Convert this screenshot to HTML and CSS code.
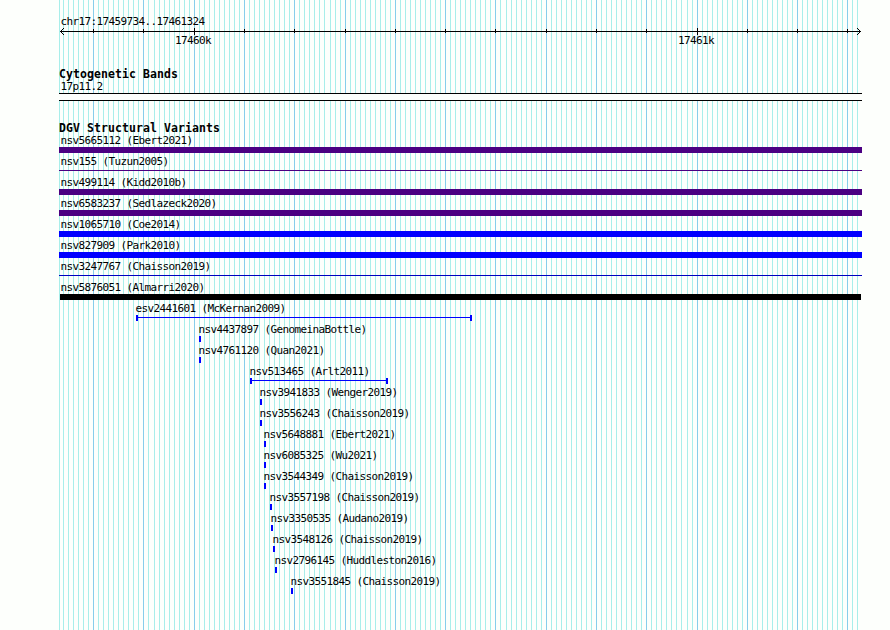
FILE: index.html
```
<!DOCTYPE html>
<html lang="en">
<head>
  <meta charset="UTF-8" />
  <title>chr17:17459734..17461324</title>
  <link rel="stylesheet" href="styles.css">
</head>
<body>
  <div class="browser">
    <svg class="grid" id="grid" width="890" height="630" shape-rendering="crispEdges"></svg>

    <div class="tracks">
      <div class="region">chr17:17459734..17461324</div>
      <svg class="ruler" id="ruler" width="803" height="8" shape-rendering="crispEdges">
        <path class="axis" d="M1 3h801v1h-801z" />
        <path class="axis" d="M2 2h1v3h-1zM3 1h1v1h-1zM3 5h1v1h-1zM4 0h1v1h-1zM4 6h1v1h-1z" />
        <path class="axis" d="M800 2h1v3h-1zM799 1h1v1h-1zM799 5h1v1h-1zM798 0h1v1h-1zM798 6h1v1h-1z" />
      </svg>
      <div class="scale"><span>17460k</span><span>17461k</span></div>

      <h2 class="title">Cytogenetic Bands</h2>
      <div class="name">17p11.2</div>
      <div class="band"></div>

      <h2 class="title variants-title">DGV Structural Variants</h2>
      <div class="variant full"><p>nsv5665112 (Ebert2021)</p><div class="bar loss"></div></div>
      <div class="variant full"><p>nsv155 (Tuzun2005)</p><div class="line loss"></div></div>
      <div class="variant full"><p>nsv499114 (Kidd2010b)</p><div class="bar loss"></div></div>
      <div class="variant full"><p>nsv6583237 (Sedlazeck2020)</p><div class="bar loss"></div></div>
      <div class="variant full"><p>nsv1065710 (Coe2014)</p><div class="bar gain"></div></div>
      <div class="variant full"><p>nsv827909 (Park2010)</p><div class="bar gain"></div></div>
      <div class="variant full"><p>nsv3247767 (Chaisson2019)</p><div class="line gain"></div></div>
      <div class="variant full"><p>nsv5876051 (Almarri2020)</p><div class="bar other"></div></div>
      <div class="variant" style="margin-left: 77px"><p>esv2441601 (McKernan2009)</p><div class="span" style="width: 336px"></div></div>
      <div class="variant" style="margin-left: 140px"><p>nsv4437897 (GenomeinaBottle)</p><div class="mark"></div></div>
      <div class="variant" style="margin-left: 140px"><p>nsv4761120 (Quan2021)</p><div class="mark"></div></div>
      <div class="variant" style="margin-left: 191px"><p>nsv513465 (Arlt2011)</p><div class="span" style="width: 138px"></div></div>
      <div class="variant" style="margin-left: 201px"><p>nsv3941833 (Wenger2019)</p><div class="mark"></div></div>
      <div class="variant" style="margin-left: 201px"><p>nsv3556243 (Chaisson2019)</p><div class="mark"></div></div>
      <div class="variant" style="margin-left: 205px"><p>nsv5648881 (Ebert2021)</p><div class="mark"></div></div>
      <div class="variant" style="margin-left: 205px"><p>nsv6085325 (Wu2021)</p><div class="mark"></div></div>
      <div class="variant" style="margin-left: 205px"><p>nsv3544349 (Chaisson2019)</p><div class="mark"></div></div>
      <div class="variant" style="margin-left: 211px"><p>nsv3557198 (Chaisson2019)</p><div class="mark"></div></div>
      <div class="variant" style="margin-left: 212px"><p>nsv3350535 (Audano2019)</p><div class="mark"></div></div>
      <div class="variant" style="margin-left: 214px"><p>nsv3548126 (Chaisson2019)</p><div class="mark"></div></div>
      <div class="variant" style="margin-left: 216px"><p>nsv2796145 (Huddleston2016)</p><div class="mark"></div></div>
      <div class="variant" style="margin-left: 232px"><p>nsv3551845 (Chaisson2019)</p><div class="mark"></div></div>
    </div>
  </div>

  <script src="script.js"></script>
</body>
</html>
```
FILE: styles.css
```
body {
  margin: 0;
  background: #fdfffc;
  color: #000;
  font-family: "DejaVu Sans Mono", monospace;
  font-size: 11px;
  letter-spacing: -0.62px;
  line-height: 12px;
}

.browser {
  position: relative;
  width: 890px;
  height: 630px;
  overflow: hidden;
}

/* grid lines run behind every track */
.grid {
  position: absolute;
  top: 0;
  left: 0;
}

.minor {
  fill: #a8eeea;
}

.major {
  fill: #87ceeb;
}

.axis {
  fill: #000;
}

.tracks {
  position: relative;
  width: 803px;
  padding: 16px 0 0 59px;
}

.region,
.name {
  padding-left: 1.5px;
}

.region {
  height: 12px;
}

.ruler {
  display: block;
}

.scale {
  display: flex;
  gap: 467px;
  height: 32px;
  padding-left: 116px;
  line-height: 10px;
}

.title {
  margin: 0;
  height: 13px;
  font-size: 11.5px;
  letter-spacing: 0.08px;
  line-height: 13px;
}

.name {
  height: 12px;
}

.band {
  height: 6px;
  border-top: 1px solid #000;
  border-bottom: 1px solid #000;
  background: #fdfffc;
}

.variants-title {
  margin-top: 21px;
}

.variant {
  height: 21px;
}

.variant p {
  margin: 0;
  height: 12px;
  margin-left: -0.5px;
  white-space: nowrap;
}

.full p {
  margin-left: 1.5px;
}

.bar {
  height: 6px;
}

.line {
  height: 1px;
  margin-top: 2px;
}

.loss {
  background: #4b0082;
}

.gain {
  background: #0000ff;
}

.line.gain {
  background: #0000c0;
}

.other {
  width: 801px;
  margin-left: 1px;
  background: #000;
}

.span {
  box-sizing: border-box;
  height: 6px;
  border: solid #0000ff;
  border-width: 0 2px;
  background: linear-gradient(#0000ff, #0000ff) 0 2px / 100% 1px no-repeat;
}

.mark {
  width: 2px;
  height: 6px;
  background: #0000ff;
}
```
FILE: script.js
```
const start = 17459734;
const end = 17461324;
const scale = 800 / (end - start + 1);

function xOf(pos) {
  return Math.round(60 + (pos - start) * scale);
}

function addRect(svg, x, y, height, cls) {
  const rect = document.createElementNS('http://www.w3.org/2000/svg', 'rect');
  rect.setAttribute('x', x);
  rect.setAttribute('y', y);
  rect.setAttribute('width', 1);
  rect.setAttribute('height', height);
  rect.setAttribute('class', cls);
  svg.appendChild(rect);
}

const grid = document.getElementById('grid');
const ruler = document.getElementById('ruler');

addRect(grid, 59, 0, 630, 'minor');
for (let pos = 17459740; pos <= end; pos += 10) {
  const x = xOf(pos);
  if (x > 858) break;
  addRect(grid, x, 0, 630, pos % 100 === 0 ? 'major' : 'minor');
  if (pos % 1000 === 0) {
    addRect(ruler, x - 59, 0, 7, 'axis');
  } else if (pos % 100 === 0) {
    addRect(ruler, x - 59, 1, 4, 'axis');
  }
}
```
